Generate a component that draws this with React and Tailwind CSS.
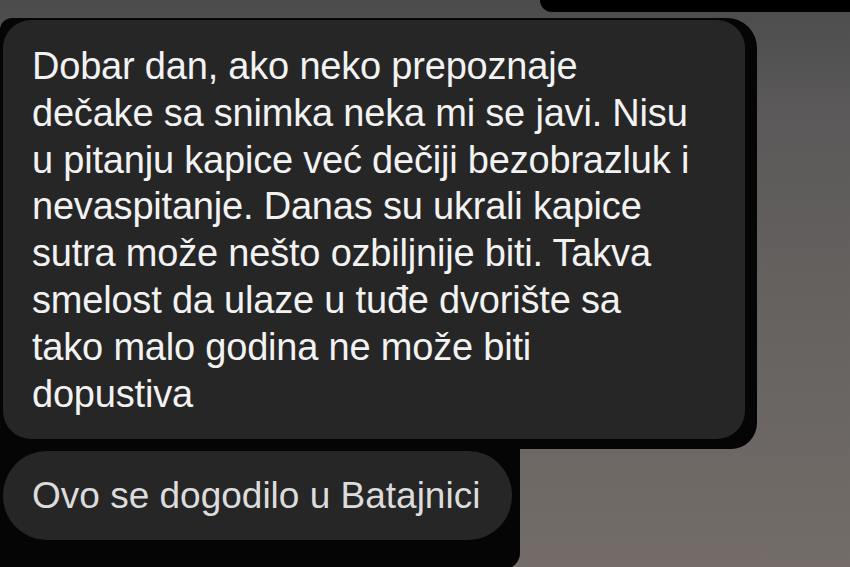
export default function App() {
  return (
    <div className="w-[850px] h-[567px] overflow-hidden bg-[linear-gradient(180deg,#4c4c4c_0%,#5b5959_20%,#6a6663_70%,#736c68_100%)] font-['Liberation_Sans',Arial,sans-serif]">
      {/* top edge of previous message */}
      <div className="flex justify-end">
        <div className="h-[12px] w-[310px] bg-black rounded-bl-[14px]" />
      </div>

      {/* message group */}
      <div className="mt-[6px] w-[757px] bg-[#050505] rounded-tl-[12px] rounded-tr-[30px] rounded-br-[26px] pl-[3px] pt-[2px] pr-[12px] pb-[10px]">
        <div className="bg-[#262626] rounded-[28px] pl-[29px] pr-[16px] pt-[23px] pb-[22px] text-[38px] tracking-[-0.2px] leading-[46.8px] text-[#f2f2f2]">
          Dobar dan, ako neko prepoznaje
          <br />
          dečake sa snimka neka mi se javi. Nisu
          <br />
          u pitanju kapice već dečiji bezobrazluk i
          <br />
          nevaspitanje. Danas su ukrali kapice
          <br />
          sutra može nešto ozbiljnije biti. Takva
          <br />
          smelost da ulaze u tuđe dvorište sa
          <br />
          tako malo godina ne može biti
          <br />
          dopustiva
        </div>
      </div>

      <div className="w-[520px] h-[120px] bg-[#050505] rounded-br-[16px] pl-[3px] pr-[8px] pt-[2px]">
        <div className="h-[89px] bg-[#262626] rounded-[44px] pl-[29px] flex items-center text-[37px] text-[#dcdcdc]">
          Ovo se dogodilo u Batajnici
        </div>
      </div>
    </div>
  );
}
